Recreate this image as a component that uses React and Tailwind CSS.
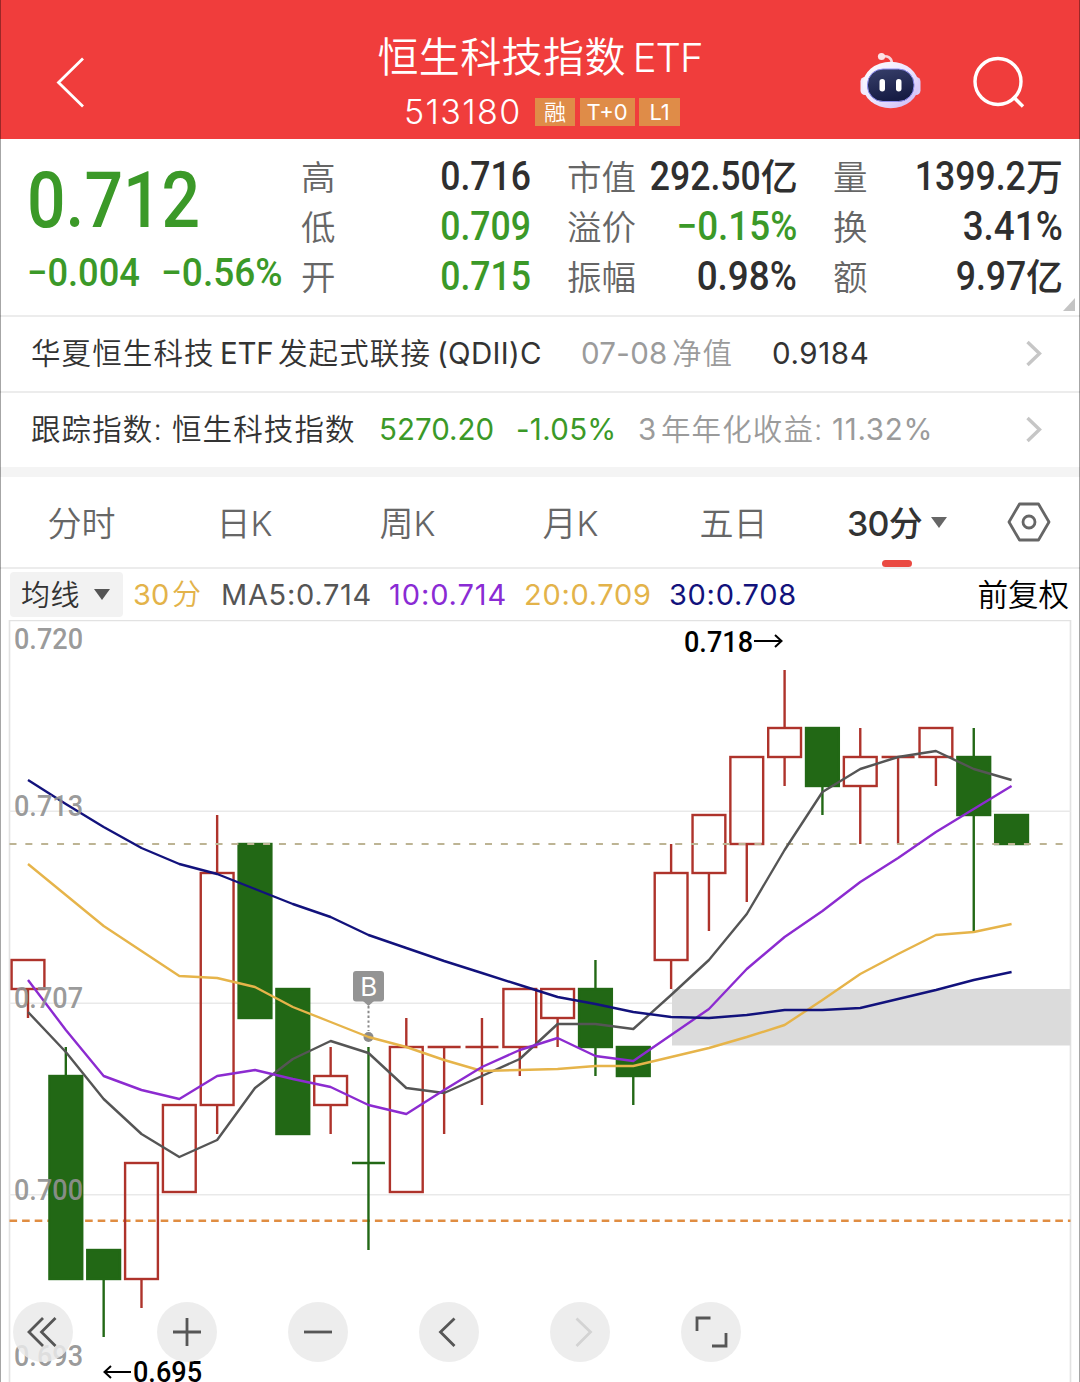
import React from 'react';

// [open, close, high, low] in thousandths
const candles = [
  [707, 708, 708, 706],
  [704, 697, 705, 697],
  [698, 697, 698, 695],
  [697, 701, 701, 696],
  [700, 703, 703, 700],
  [703, 711, 713, 702],
  [712, 706, 712, 706],
  [707, 702, 707, 702],
  [703, 704, 705, 702],
  [701, 701, 705, 698],
  [700, 705, 706, 700],
  [705, 705, 705, 702],
  [705, 705, 706, 703],
  [705, 707, 707, 704],
  [706, 707, 707, 705],
  [707, 705, 708, 704],
  [705, 704, 705, 703],
  [708, 711, 712, 707],
  [711, 713, 713, 709],
  [712, 715, 715, 710],
  [715, 716, 718, 714],
  [716, 714, 716, 713],
  [714, 715, 716, 712],
  [715, 715, 715, 712],
  [715, 716, 716, 714],
  [715, 713, 716, 709],
  [713, 712, 713, 712],
];

const averages = [
  {
    color: '#555555',
    points: [1012, 1052, 1099, 1134, 1157, 1140, 1088, 1059, 1041, 1053, 1088, 1093, 1076, 1059, 1024, 1024, 1029, 995, 960, 914, 850, 792, 769, 757, 751, 769, 780],
  },
  {
    color: '#e6b44a',
    points: [864, 895, 926, 951, 976, 978, 987, 1007, 1022, 1037, 1047, 1060, 1071, 1070, 1069, 1066, 1066, 1057, 1048, 1037, 1025, 1000, 974, 954, 935, 932, 924],
  },
  {
    color: '#8c2bd0',
    points: [980, 1030, 1076, 1090, 1099, 1076, 1070, 1079, 1087, 1105, 1114, 1090, 1067, 1050, 1038, 1056, 1061, 1035, 1009, 969, 937, 911, 882, 858, 832, 809, 786],
  },
  {
    color: '#12127c',
    points: [780, 804, 827, 848, 864, 874, 889, 904, 917, 935, 948, 961, 973, 985, 997, 1004, 1012, 1017, 1018, 1015, 1010, 1010, 1008, 999, 990, 980, 972],
  },
];

const axisLabels = [
  ['0.720', 649],
  ['0.713', 815.5],
  ['0.707', 1007.5],
  ['0.700', 1199.5],
  ['0.693', 1366],
];

const tabs = ['分时', '日K', '周K', '月K', '五日'];

const xOf = (i) => 28 + i * 37.83;
const yOf = (price) => 844 + (712 - price) * 29;

function Candle({ index, data }) {
  const [open, close, high, low] = data;
  const x = xOf(index);
  const top = yOf(Math.max(open, close));
  const bottom = yOf(Math.min(open, close));
  const falling = close < open || index === 9;
  const color = falling ? '#226815' : '#ae332b';

  return (
    <g stroke={color} strokeWidth="2.4" fill="none">
      {yOf(high) < top && <path d={`M${x} ${yOf(high)}V${top}`} />}
      {yOf(low) > bottom && <path d={`M${x} ${bottom}V${yOf(low)}`} />}
      {open === close && <path d={`M${x - 16.5} ${top}H${x + 16.5}`} />}
      {open !== close && (
        <rect x={x - 16.4} y={top} width="32.8" height={bottom - top} fill={falling ? color : 'none'} />
      )}
    </g>
  );
}

function Chart() {
  return (
    <svg className="block w-full h-full" viewBox="0 620 1080 762" fontFamily="Roboto, sans-serif">
      <g stroke="#e9e9e9" strokeWidth="1.6" fill="none">
        <path d="M9.5 1382V620.5H1070.5V1382" stroke="#e2e2e2" />
        <path d="M9.5 811.3H1070.5M9.5 1003.3H1070.5M9.5 1194.8H1070.5" />
      </g>
      <rect x="672" y="989" width="398.5" height="56.5" fill="#dbdbdb" />
      <path d="M9.5 1220.7H1070.5" stroke="#e08d42" strokeWidth="2.4" strokeDasharray="7.6 5" />

      {candles.map((data, i) => (
        <Candle key={i} index={i} data={data} />
      ))}
      <path d="M9.5 844H1070.5" stroke="#bdb494" strokeWidth="1.8" strokeDasharray="7 8.85" />

      {/* buy marker */}
      <g>
        <rect x="353" y="971" width="31" height="30.5" rx="3" fill="#949494" />
        <path d="M363 1001l5.5 5l5.5-5z" fill="#949494" />
        <path d="M368.5 1006V1031" stroke="#8a8a8a" strokeWidth="2" strokeDasharray="2.4 2.4" />
        <circle cx="368.5" cy="1037" r="5" fill="#8a8a8a" />
        <text x="368.8" y="996" fontSize="26" fill="#fff" textAnchor="middle" fontFamily="Inter, sans-serif">B</text>
      </g>

      {averages.map((line) => (
        <polyline
          key={line.color}
          fill="none"
          stroke={line.color}
          strokeWidth="2.4"
          strokeLinejoin="round"
          points={line.points.map((y, i) => `${xOf(i)},${y}`).join(' ')}
        />
      ))}

      <g fontSize="28.6" fontWeight="500" fill="#919191" fillOpacity="0.92">
        {axisLabels.map(([label, y]) => (
          <text key={label} x="14" y={y} textLength="69" lengthAdjust="spacingAndGlyphs">{label}</text>
        ))}
      </g>

      <g fontSize="28.6" fontWeight="500" fill="#000">
        <text x="684" y="651.5" textLength="69" lengthAdjust="spacingAndGlyphs">0.718</text>
        <text x="133" y="1381.5" textLength="69" lengthAdjust="spacingAndGlyphs">0.695</text>
        <path d="M754 641H781M775 635l6.5 6l-6.5 6" fill="none" stroke="#000" strokeWidth="2" />
        <path d="M131 1372H105M111 1366l-6.5 6l6.5 6" fill="none" stroke="#000" strokeWidth="2" />
      </g>
    </svg>
  );
}

function RoundButton({ path, color = '#565656', className = '' }) {
  return (
    <button className={`w-15 h-15 rounded-full bg-[#eaeaea]/85 ${className}`}>
      <svg className="block w-15 h-15" viewBox="0 0 60 60" fill="none" stroke={color} strokeWidth="2.8">
        <path d={path} />
      </svg>
    </button>
  );
}

function ChartControls() {
  return (
    <div className="absolute left-[13px] bottom-[20px] flex gap-[71px]">
      <RoundButton className="mr-[13px]" path="M30 16L16 30L30 44M42.500 16L28.500 30L42.500 44" />
      <RoundButton path="M16 30H44M30 16V44" />
      <RoundButton path="M16 30H44" />
      <RoundButton path="M35.500 16.500L21.500 30L35.500 44" />
      <RoundButton path="M26.500 16.500L40.500 30L26.500 44" color="#d3d3d3" />
      <RoundButton path="M16 29V16H29.500M45 31V44H31" />
    </div>
  );
}

function Robot() {
  return (
    <svg className="block w-[64px] h-[60px]" viewBox="859 51 64 60">
      <defs>
        <linearGradient id="shell" x1="0" y1="0" x2="1" y2="1">
          <stop offset="0" stopColor="#ffffff" />
          <stop offset="0.5" stopColor="#ece6ff" />
          <stop offset="1" stopColor="#c9b3f5" />
        </linearGradient>
        <linearGradient id="visor" x1="0" y1="0" x2="0.3" y2="1">
          <stop offset="0" stopColor="#38406b" />
          <stop offset="1" stopColor="#161c44" />
        </linearGradient>
      </defs>
      <path d="M882 56.500Q891 55 892 63" fill="none" stroke="#f7d5dc" strokeWidth="2.600" />
      <circle cx="881.500" cy="56.500" r="3.600" fill="#fde3e6" />
      <rect x="860.500" y="77" width="10" height="18" rx="4.500" fill="#f3e9fb" />
      <rect x="910" y="77" width="10.500" height="18" rx="4.500" fill="#d9cdfa" />
      <ellipse cx="890.700" cy="85" rx="28" ry="23.300" fill="url(#shell)" />
      <rect x="867.500" y="69" width="46.500" height="32.500" rx="15.500" fill="url(#visor)" stroke="#8e8df0" strokeWidth="1" />
      <rect x="879.500" y="79" width="5.500" height="12.500" rx="2.700" fill="#fff" />
      <rect x="896" y="79" width="5.500" height="12.500" rx="2.700" fill="#fff" />
    </svg>
  );
}

function Header() {
  return (
    <header className="h-[139px] bg-[#f03d3c] text-white flex">
      <div className="w-[300px] pt-[54px] pl-[54px]">
        <svg className="block w-[34px] h-[56px]" viewBox="54 54 34 56" fill="none" stroke="#fff" strokeWidth="2.8">
          <path d="M83 58.500L58.500 82.500L83 106.500" />
        </svg>
      </div>
      <div className="w-[480px] flex flex-col items-center pt-[33px]">
        <h1 className="flex items-center h-[50px] text-[41px] font-[350] whitespace-nowrap">
          <span className="tracking-[0.4px]">恒生科技指数</span>
          <span className="ml-[7px] text-[40px] tracking-[-1px]">ETF</span>
        </h1>
        <div className="flex items-center h-[34px] gap-[4.5px] mt-[11.5px] pl-[4px]">
          <span className="mr-[9px] text-[34px] font-[350] leading-none tracking-[1.4px]">513180</span>
          <span className="w-[40px] h-[28px] bg-[#df8c48] text-[22px] leading-[28px] text-center font-[350]">融</span>
          <span className="w-[55px] h-[28px] bg-[#df8c48] text-[22px] leading-[28px] text-center">T+0</span>
          <span className="w-[41px] h-[28px] bg-[#df8c48] text-[22px] leading-[28px] text-center">L1</span>
        </div>
      </div>
      <div className="flex pl-[79px] pt-[51px]">
        <Robot />
        <svg className="block ml-[49px] w-[56px] h-[60px]" viewBox="972 51 56 60" fill="none" stroke="#fff" strokeWidth="3.4">
          <circle cx="998" cy="81.500" r="23" />
          <path d="M1013 96.500L1023 106.500" />
        </svg>
      </div>
    </header>
  );
}

// narrow digits, anchored to the right edge of the column
function Stat({ label, value, unit, green }) {
  const squeeze = value.endsWith('%') ? 'scale-x-[0.92]' : 'scale-x-[0.89]';
  return (
    <div className="h-[50px] flex items-center justify-between whitespace-nowrap">
      <span className="pt-[4px] text-[34.5px] font-[350] text-[#666]">{label}</span>
      <span className={`flex items-center pt-[2px] font-medium ${green ? 'text-[#3b9928]' : 'text-[#2f2f2f]'}`}>
        <span className={`inline-block origin-right font-[Roboto] text-[40px] leading-none ${squeeze}`}>{value}</span>
        {unit && <span className="text-[37px] leading-none">{unit}</span>}
      </span>
    </div>
  );
}

function Quote() {
  return (
    <section className="relative h-[178px] border-b-2 border-[#ececec] flex pt-[12px]">
      <div className="w-[301px] pl-[27px] font-[Roboto] font-medium text-[#3b9928] whitespace-nowrap">
        <div className="h-[99px] pt-[8px]">
          <span className="inline-block origin-left scale-x-[0.87] text-[78px] leading-[84px]">0.712</span>
        </div>
        <div className="flex text-[39px] leading-[46px]">
          <span className="w-[134px]"><span className="inline-block origin-left scale-x-[0.93]">−0.004</span></span>
          <span className="inline-block origin-left scale-x-[0.95]">−0.56%</span>
        </div>
      </div>
      <div className="w-[230px]">
        <Stat label="高" value="0.716" />
        <Stat label="低" value="0.709" green />
        <Stat label="开" value="0.715" green />
      </div>
      <div className="w-[230px] ml-[36px]">
        <Stat label="市值" value="292.50" unit="亿" />
        <Stat label="溢价" value="−0.15%" green />
        <Stat label="振幅" value="0.98%" />
      </div>
      <div className="w-[230px] ml-[36px]">
        <Stat label="量" value="1399.2" unit="万" />
        <Stat label="换" value="3.41%" />
        <Stat label="额" value="9.97" unit="亿" />
      </div>
      <svg className="absolute right-[5px] bottom-[4px] w-[12px] h-[13px]" viewBox="0 0 12 13">
        <path d="M12 0V13H0z" fill="#c4c4c4" />
      </svg>
    </section>
  );
}

function RowArrow() {
  return (
    <svg className="ml-auto mr-[36px] w-[20px] h-[28px]" viewBox="0 0 20 28" fill="none" stroke="#c6c6c6" strokeWidth="3.4">
      <path d="M3.500 3L15.500 14.500L3.500 26" />
    </svg>
  );
}

function FundRows() {
  return (
    <section className="text-[29.5px] text-[#333] whitespace-nowrap">
      <div className="h-[76px] border-b-2 border-[#ececec] flex items-center pl-[31px] pb-[2px]">
        <span className="w-[189px] font-[350] tracking-[1.1px]">华夏恒生科技</span>
        <span className="w-[58px] tracking-[-0.2px]">ETF</span>
        <span className="w-[159px] font-[350] tracking-[1.1px]">发起式联接</span>
        <span className="w-[144px] tracking-[0.3px]">(QDII)C</span>
        <span className="w-[91px] text-[#9b9b9b] tracking-[0.3px]">07-08</span>
        <span className="w-[100px] font-[350] text-[#9b9b9b] tracking-[1.1px]">净值</span>
        <span className="tracking-[0.6px]">0.9184</span>
        <RowArrow />
      </div>
      <div className="h-[74px] flex items-center pl-[31px] pb-[2px]">
        <span className="w-[141px] font-[350] tracking-[1.1px]">跟踪指数:</span>
        <span className="w-[207px] font-[350] tracking-[1.1px]">恒生科技指数</span>
        <span className="w-[137px] text-[#3b9928]">5270.20</span>
        <span className="w-[122px] text-[#3b9928] tracking-[0.3px]">-1.05%</span>
        <span className="w-[23px] text-[#9b9b9b]">3</span>
        <span className="w-[171px] font-[350] text-[#9b9b9b] tracking-[1.1px]">年年化收益:</span>
        <span className="text-[#9b9b9b] tracking-[0.7px]">11.32%</span>
        <RowArrow />
      </div>
      <div className="h-[10px] bg-[#f4f4f4]" />
    </section>
  );
}

function Tabs() {
  return (
    <nav className="h-[92px] border-b-2 border-[#ececec] flex text-[34px] text-[#666] whitespace-nowrap">
      {tabs.map((tab) => (
        <button key={tab} className="w-[163px] pt-[3px] font-[350]">{tab}</button>
      ))}
      <div className="relative w-[164px] flex items-center justify-center">
        <span className="pt-[3px] font-medium text-[#333] tracking-[-0.8px]">30分</span>
        <svg className="ml-[9px] w-[16px] h-[11px]" viewBox="0 0 16 11"><path d="M0 0H16L8 11z" fill="#666" /></svg>
        <span className="absolute left-[67px] bottom-[0px] w-[30px] h-[7px] rounded-full bg-[#ea4a42]" />
      </div>
      <div className="flex-1 flex items-center justify-center pr-[2px]">
        <svg className="w-[44px] h-[42px]" viewBox="0 0 44 42" fill="none" stroke="#666" strokeWidth="2.8">
          <path d="M12.500 3H31.500L42 21L31.500 39H12.500L2 21z" strokeLinejoin="round" />
          <circle cx="22" cy="21" r="6" />
        </svg>
      </div>
    </nav>
  );
}

function Averages() {
  return (
    <div className="h-[51px] flex items-center pl-[10px] text-[29px] whitespace-nowrap">
      <button className="w-[113px] h-[45px] mr-[10px] rounded-sm bg-[#f2f2f2] flex items-center pl-[11px] text-[#333]">
        <span className="w-[73px] pt-[2px] text-left font-[350] tracking-[0.5px]">均线</span>
        <svg className="w-[16px] h-[11px]" viewBox="0 0 16 11"><path d="M0 0H16L8 11z" fill="#555" /></svg>
      </button>
      <span className="w-[39px] text-[#e3b34a]">30</span>
      <span className="w-[49px] font-[350] text-[#e3b34a]">分</span>
      <span className="w-[168px] text-[#555] tracking-[0.7px]">MA5:0.714</span>
      <span className="w-[135px] text-[#8a2bd4] tracking-[0.9px]">10:0.714</span>
      <span className="w-[145px] text-[#e3b34a] tracking-[0.7px]">20:0.709</span>
      <span className="text-[#12127c] tracking-[0.7px]">30:0.708</span>
      <span className="ml-auto mr-[11px] text-[30.5px] font-[350] text-black">前复权</span>
    </div>
  );
}

function App() {
  return (
    <div className="relative w-[1080px] h-[1382px] overflow-hidden bg-white font-[Inter,'Noto_Sans_CJK_SC',sans-serif]">
      <Header />
      <Quote />
      <FundRows />
      <Tabs />
      <Averages />
      <div className="relative h-[762px]">
        <Chart />
        <ChartControls />
      </div>
      <div className="absolute inset-0 border-x border-black/35 pointer-events-none" />
    </div>
  );
}

export default App;
